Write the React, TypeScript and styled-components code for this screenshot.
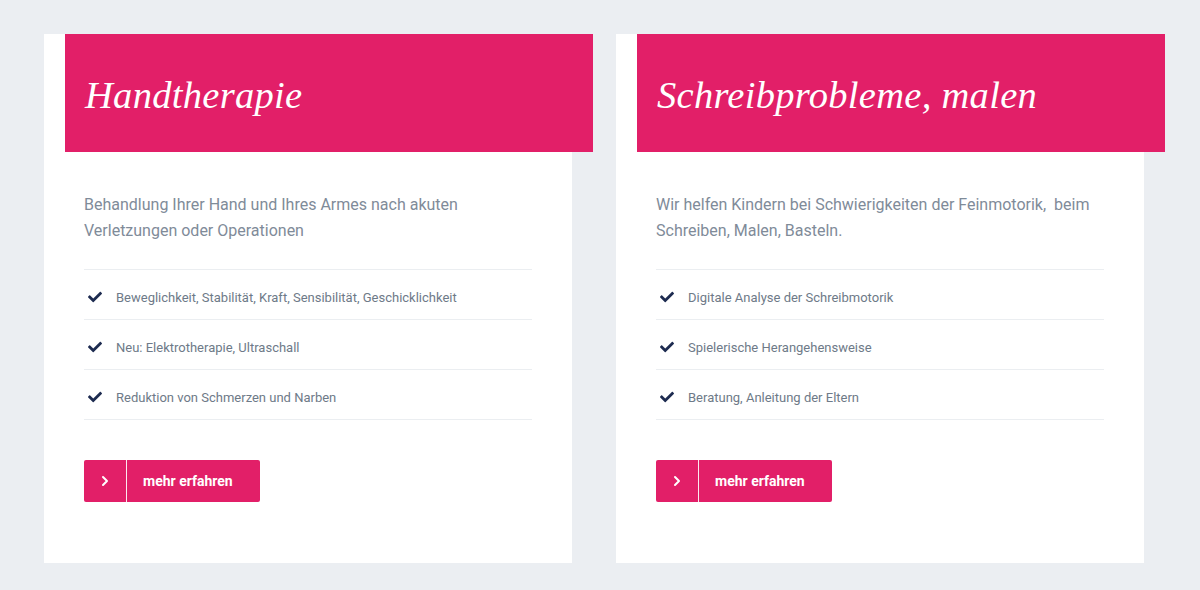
import React from 'react'
import styled, { createGlobalStyle } from 'styled-components';
import { FaCheck } from 'react-icons/fa';
import { ChevronRight } from 'lucide-react';

const GlobalStyle = createGlobalStyle`
    body {
        margin: 0;
        background: #ebeef2;
        font-family: Roboto, "Liberation Sans", sans-serif;
    }
`;

const Page = styled.div`
    display: flex;
    gap: 44px;
    padding: 34px 44px 28px;
    align-items: flex-start;
`;

const Card = styled.div`
    width: 528px;
    background: #fff;
    display: flex;
    flex-direction: column;
    padding-bottom: 61px;
`;

const Header = styled.div`
    height: 118px;
    margin-left: 21px;
    margin-right: -21px;
    background: #e21f68;
    display: flex;
    align-items: center;
    padding: 0 20px;
`;

const Title = styled.h2`
    margin: 4px 0 0;
    font-family: "Liberation Serif", serif;
    font-style: italic;
    font-weight: 400;
    font-size: 38.5px;
    color: #fff;
    letter-spacing: 0.3px;
`;

const Body = styled.div`
    padding: 40px 40px 0;
`;

const Description = styled.p`
    margin: 0 0 25px;
    font-size: 16px;
    line-height: 26px;
    color: #7f8b99;
`;

const List = styled.ul`
    list-style: none;
    margin: 0;
    padding: 0;
    border-top: 1px solid #ebeef1;
`;

const Item = styled.li`
    display: flex;
    align-items: center;
    height: 50px;
    box-sizing: border-box;
    padding-top: 5px;
    border-bottom: 1px solid #ebeef1;
    font-size: 13px;
    color: #6e7a88;
    svg {
        color: #1d2b50;
        margin-left: 4px;
        margin-right: 14px;
    }
`;

const Button = styled.a`
    display: inline-flex;
    margin-top: 40px;
    height: 42px;
    width: 176px;
    background: #e21f68;
    border-radius: 2px;
    color: #fff;
    font-weight: 700;
    font-size: 14px;
    text-decoration: none;
    cursor: pointer;
`;

const ButtonIcon = styled.span`
    width: 42px;
    display: flex;
    align-items: center;
    justify-content: center;
    border-right: 1px solid rgba(255, 255, 255, 0.9);
`;

const ButtonLabel = styled.span`
    display: flex;
    align-items: center;
    padding-left: 16px;
`;

interface CardProps {
    title: string;
    text: string;
    items: string[];
}

const Service: React.FC<CardProps> = ({ title, text, items }: CardProps) => {
    return (
        <Card>
            <Header>
                <Title>{title}</Title>
            </Header>
            <Body>
                <Description>{text}</Description>
                <List>
                    {items.map((item) => (
                        <Item key={item}>
                            <FaCheck size={14} />
                            {item}
                        </Item>
                    ))}
                </List>
                <Button>
                    <ButtonIcon><ChevronRight size={16} strokeWidth={3} /></ButtonIcon>
                    <ButtonLabel>mehr erfahren</ButtonLabel>
                </Button>
            </Body>
        </Card>
    )
}

const App: React.FC = () => {
    return (
        <>
            <GlobalStyle />
            <Page>
                <Service
                    title="Handtherapie"
                    text="Behandlung Ihrer Hand und Ihres Armes nach akuten Verletzungen oder Operationen"
                    items={[
                        'Beweglichkeit, Stabilität, Kraft, Sensibilität, Geschicklichkeit',
                        'Neu: Elektrotherapie, Ultraschall',
                        'Reduktion von Schmerzen und Narben',
                    ]}
                />
                <Service
                    title="Schreibprobleme, malen"
                    text={'Wir helfen Kindern bei Schwierigkeiten der Feinmotorik,\u00a0 beim Schreiben, Malen, Basteln.'}
                    items={[
                        'Digitale Analyse der Schreibmotorik',
                        'Spielerische Herangehensweise',
                        'Beratung, Anleitung der Eltern',
                    ]}
                />
            </Page>
        </>
    )
}

export default App
